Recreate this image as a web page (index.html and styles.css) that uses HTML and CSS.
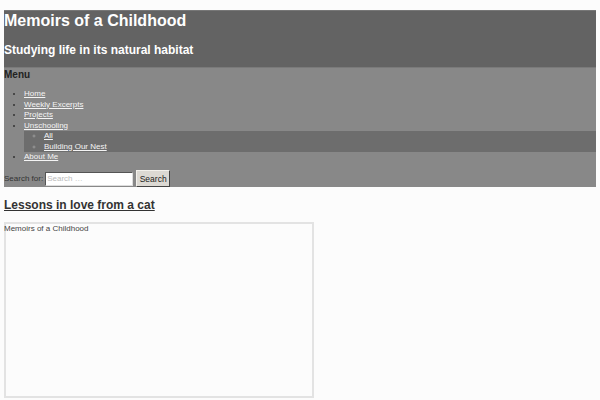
FILE: index.html
```html
<!DOCTYPE html>
<html>
<head>
<meta charset="utf-8">
<link rel="stylesheet" href="styles.css">
</head>
<body>
<header class="site-header">
  <h1 class="site-title">Memoirs of a Childhood</h1>
  <p class="site-tagline">Studying life in its natural habitat</p>
</header>
<nav class="site-nav">
  <h3 class="menu-title">Menu</h3>
  <ul class="menu">
    <li><a href="#">Home</a></li>
    <li><a href="#">Weekly Excerpts</a></li>
    <li><a href="#">Projects</a></li>
    <li><a href="#">Unschooling</a>
      <ul class="submenu">
        <li><a href="#">All</a></li>
        <li><a href="#">Building Our Nest</a></li>
      </ul>
    </li>
    <li><a href="#">About Me</a></li>
  </ul>
  <form class="search">
    <label class="search-label">Search for:</label>
    <input class="search-input" type="text" placeholder="Search …">
    <button class="search-btn" type="button">Search</button>
  </form>
</nav>
<main class="content">
  <h2 class="post-title"><a href="#">Lessons in love from a cat</a></h2>
  <div class="embed">Memoirs of a Childhood</div>
</main>
</body>
</html>
```
FILE: styles.css
```css
html { background: #fcfcfc; }
body {
  margin: 10px 4px 0;
  font-family: "Liberation Sans", Arial, sans-serif;
  color: #333;
}
.site-header {
  background: #636363;
  border-top: 1px solid #777;
  padding: 0 0 9px;
  color: #fff;
}
.site-title {
  margin: 0;
  font-size: 16px;
  line-height: 20px;
  font-weight: bold;
}
.site-tagline {
  margin: 11px 0 0;
  font-size: 12px;
  line-height: 16px;
  font-weight: bold;
}
.site-nav {
  background: #888;
  border-top: 1px solid #7a7a7a;
  padding-top: 1px;
}
.menu-title {
  margin: 0;
  font-size: 10px;
  line-height: 12px;
  font-weight: bold;
  color: #222;
}
.menu {
  margin: 8px 0 0;
  padding-left: 20px;
  font-size: 8px;
  line-height: 10.5px;
  color: #333;
}
.menu a { color: #f4f4f4; }
.submenu {
  margin: 0;
  padding-left: 20px;
  background: #6d6d6d;
  list-style: circle;
}
.submenu li::marker { color: #999; }
.search {
  display: flex;
  align-items: center;
  margin: 0;
  padding: 8px 0 0;
  height: 16px;
  font-size: 8px;
  color: #333;
}
.search-label { margin-right: 2px; }
.search-input {
  width: 88px;
  height: 14px;
  box-sizing: border-box;
  margin: 0 3px 0 0;
  padding: 0 1px;
  border: 1px solid #555;
  border-right-color: #ddd;
  border-bottom-color: #ddd;
  background: #fff;
  font-family: "Liberation Sans", Arial, sans-serif;
  font-size: 8px;
}
.search-input::placeholder { color: #bbb; }
.search-btn {
  width: 34px;
  height: 17px;
  box-sizing: border-box;
  margin: 0;
  padding: 0;
  border: 1px solid #f3f1ec;
  border-right-color: #444;
  border-bottom-color: #444;
  background: #dcd9d3;
  color: #222;
  font-family: "Liberation Sans", Arial, sans-serif;
  font-size: 8.5px;
}
.content { padding-top: 11px; }
.post-title {
  margin: 0;
  font-size: 12px;
  line-height: 14px;
  font-weight: bold;
}
.post-title a { color: #333; }
.embed {
  margin-top: 10px;
  width: 310px;
  height: 176px;
  box-shadow: inset 0 0 0 2px #e3e3e3;
  font-size: 8px;
  line-height: 13px;
  color: #444;
}
```
